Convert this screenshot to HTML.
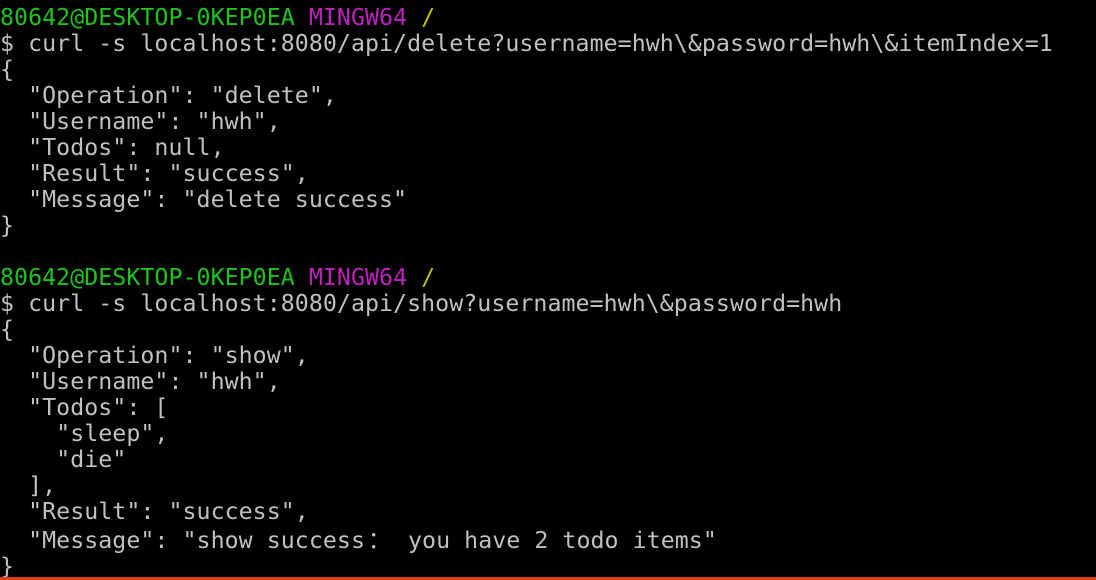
<!DOCTYPE html>
<html><head><meta charset="utf-8"><style>
html,body{margin:0;padding:0;background:#000;width:1096px;height:580px;overflow:hidden}
pre{margin:0;padding:5px 0 0 0;font-family:"DejaVu Sans Mono","Liberation Mono",monospace;font-size:23.25px;line-height:26px;color:#c0c0c0;letter-spacing:0.04px}
.g{color:#1cc41c}.m{color:#c020c0}.y{color:#c0c000}
.w{display:inline-block;width:29px;text-align:center;font-family:"Noto Sans CJK SC",sans-serif}
.bar{position:absolute;left:0;top:577px;width:1096px;height:3px;background:#e0401c}
</style></head><body>
<pre><span class="g">80642@DESKTOP-0KEP0EA</span> <span class="m">MINGW64</span> <span class="y">/</span>
$ curl -s localhost:8080/api/delete?username=hwh\&amp;password=hwh\&amp;itemIndex=1
{
  "Operation": "delete",
  "Username": "hwh",
  "Todos": null,
  "Result": "success",
  "Message": "delete success"
}

<span class="g">80642@DESKTOP-0KEP0EA</span> <span class="m">MINGW64</span> <span class="y">/</span>
$ curl -s localhost:8080/api/show?username=hwh\&amp;password=hwh
{
  "Operation": "show",
  "Username": "hwh",
  "Todos": [
    "sleep",
    "die"
  ],
  "Result": "success",
  "Message": "show success<span class="w">：</span> you have 2 todo items"
}</pre>
<div class="bar"></div>
</body></html>
